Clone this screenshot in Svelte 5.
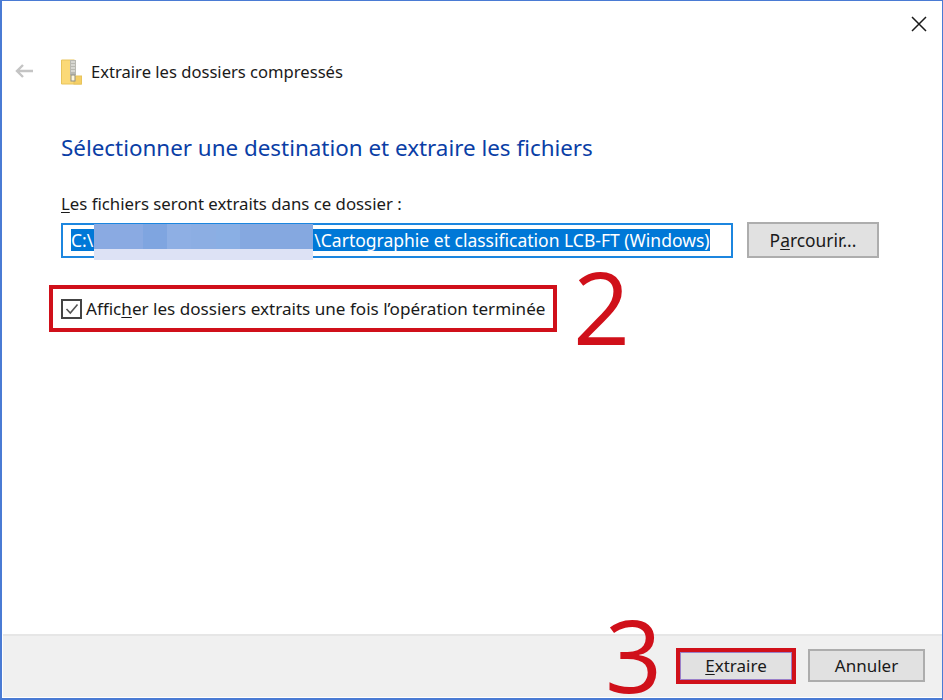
<script>
  let openAfter = $state(true)
  const blurCols = ['#8aaae2', '#8aaae2', '#7fa5e0', '#8eafe4', '#8caee3', '#8aafe4', '#85a8e0', '#85a8e0', '#85a8e0']
</script>

<div class="window">
  <div class="top">
    <button class="close" aria-label="Fermer">
      <svg width="16" height="16" viewBox="0 0 16 16"><path d="M1 1l14 14M15 1L1 15" stroke="#1a1a1a" stroke-width="1.5" fill="none" /></svg>
    </button>
  </div>

  <div class="nav">
    <svg class="back" width="20" height="16" viewBox="0 0 20 16"><path d="M19 8H3M9 2L3 8l6 6" stroke="#c4c4c4" stroke-width="2.4" fill="none" /></svg>
    <svg class="zip" width="21" height="26" viewBox="0 0 21 26">
      <path d="M0.5 1h13v20h7v4H0.5z" fill="#fbd977" stroke="#e8c45c" />
      <rect x="13" y="17" width="7.5" height="8" fill="#f5cf66" stroke="#e8c45c" />
      <rect x="9" y="1" width="6" height="15" fill="#b9b9b2" />
      <path d="M10 3h4M10 6h4M10 9h4M10 12h4" stroke="#f4f4f0" stroke-width="1" />
      <rect x="10" y="16" width="4" height="6" fill="#fff6d8" stroke="#8f8f86" />
    </svg>
    <span class="nav-title">Extraire les dossiers compressés</span>
  </div>

  <div class="content">
    <h1>Sélectionner une destination et extraire les fichiers</h1>
    <label class="path-label" for="dest"><u>L</u>es fichiers seront extraits dans ce dossier :</label>
    <div class="path-row">
      <div class="path-input" id="dest">
        <span class="selected">C:\<span class="hidden-part"></span>\Cartographie et classification LCB-FT (Windows)</span>
        <div class="blur">
          {#each blurCols as c}
            <i style="background:{c}"></i>
          {/each}
        </div>
      </div>
      <button class="btn browse">P<u>a</u>rcourir...</button>
    </div>

    <div class="check-row">
      <button class="check" aria-label="Afficher" onclick={() => openAfter = !openAfter}>
        {#if openAfter}
          <svg width="14" height="14" viewBox="0 0 14 14"><path d="M1.5 7l3.8 4L12.5 2.5" stroke="#555" stroke-width="1.6" fill="none" /></svg>
        {/if}
      </button>
      <span class="check-text">Affic<u>h</u>er les dossiers extraits une fois l’opération terminée</span>
      <div class="mark mark-check"></div>
      <span class="step step-two">2</span>
    </div>
  </div>

  <div class="footer">
    <span class="step step-three">3</span>
    <div class="extract-wrap">
      <button class="btn extract"><u>E</u>xtraire</button>
    </div>
    <button class="btn cancel">Annuler</button>
  </div>
</div>

<style>
  :global(body) { margin: 0; background: #fff; }
  .window { width: 943px; height: 700px; box-sizing: border-box; border: solid #4a7bd4; border-width: 1px 1px 2px 2px; background: #fff; display: flex; flex-direction: column; font-family: "Noto Sans", "Open Sans", sans-serif; color: #1a1a1a; font-size: 17px; overflow: hidden; }
  u { text-decoration-thickness: 1px; text-underline-offset: 2px; }

  .top { display: flex; justify-content: flex-end; height: 48px; flex: none; }
  .close { border: none; background: none; padding: 0; margin: 15px 15px 0 0; width: 16px; height: 16px; display: block; }
  .close svg { display: block; }

  .nav { display: flex; align-items: center; height: 46px; flex: none; }
  .back { margin-left: 12px; margin-bottom: 3px; }
  .zip { margin-left: 27px; margin-right: 9px; margin-bottom: 1px; }
  .nav-title { font-size: 16.6px; margin-bottom: 2px; }

  .content { flex: 1; padding: 0 0 0 59px; }
  h1 { font-size: 22.4px; font-weight: 400; color: #0a3ea6; margin: 36px 0 0; line-height: 34px; }
  .path-label { display: block; margin-top: 28px; line-height: 22px; font-size: 16.8px; }

  .path-row { display: flex; align-items: center; margin-top: 7px; }
  .path-input { position: relative; box-sizing: border-box; width: 672px; height: 35px; border: 2px solid #1c86df; display: flex; align-items: center; padding-left: 8px; }
  .selected { background: #0078d7; color: #fff; line-height: 22px; white-space: nowrap; display: inline-block; font-size: 17.5px; }
  .hidden-part { display: inline-block; width: 221px; }
  .blur { position: absolute; left: 31px; top: -1px; width: 219px; height: 36px; display: flex; background: #dde2f5; }
  .blur i { flex: 1; height: 25px; }

  .btn { box-sizing: border-box; border: 2px solid #adadad; background: #e1e1e1; color: #1a1a1a; font: inherit; padding: 0; }
  .browse { width: 132px; height: 36px; margin-left: 14px; font-size: 17.4px; }

  .check-row { position: relative; display: flex; align-items: center; height: 47px; margin-top: 27px; padding-left: 0; white-space: nowrap; }
  .check-text { font-size: 17.1px; }
  .check { box-sizing: border-box; width: 21px; height: 20px; border: 2px solid #444; background: #fff; padding: 0; margin-right: 4px; display: flex; align-items: center; justify-content: center; }
  .mark { position: absolute; box-sizing: border-box; border: 4px solid #d0101a; pointer-events: none; }
  .mark-check { left: -12px; top: 0; width: 508px; height: 47px; }
  .step { position: absolute; color: #d0101a; font-family: "Open Sans", sans-serif; font-weight: 400; font-size: 100px; line-height: 72px; }
  .step-two { left: 512px; top: -15px; }

  .footer { position: relative; flex: none; height: 63px; margin: 0 0 1px 1px; box-sizing: border-box; background: #f0f0f0; border-top: 2px solid #e6e6e6; display: flex; align-items: center; justify-content: flex-end; padding: 0 17px 2px 0; gap: 12px; }
  .step-three { left: 602px; top: -18px; }
  .extract-wrap { box-sizing: border-box; border: 4px solid #d0101a; width: 120px; height: 36px; display: flex; }
  .extract { flex: 1; border-color: #9a7fc8; border-width: 1px; }
  .cancel { width: 117px; height: 33px; }
</style>
